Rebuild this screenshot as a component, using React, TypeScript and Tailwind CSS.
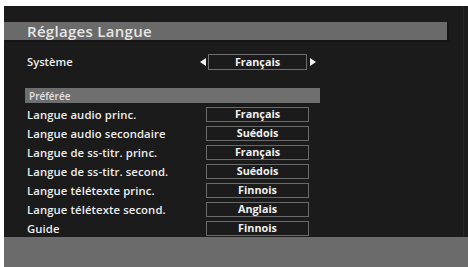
import React from "react";

const rows: [string, string][] = [
  ["Langue audio princ.", "Français"],
  ["Langue audio secondaire", "Suédois"],
  ["Langue de ss-titr. princ.", "Français"],
  ["Langue de ss-titr. second.", "Suédois"],
  ["Langue télétexte princ.", "Finnois"],
  ["Langue télétexte second.", "Anglais"],
  ["Guide", "Finnois"],
];

const font = { fontFamily: '"Open Sans", "DejaVu Sans", sans-serif' };

export default function App() {
  return (
    <div className="w-[468px] h-[267px] bg-white pt-[6px] pl-[4px] overflow-hidden" style={font}>
      <div className="w-[464px] h-[261px] bg-[#1b1b1b] flex flex-col relative">
        <div className="absolute right-[4px] top-0 bottom-[30px] w-px bg-[#262626]" />
        <div className="mt-[16px] mr-[21px] h-[18px] bg-[#6a6a6a] flex items-center pl-[23px] shadow-[2px_2px_0_#141414]">
          <span className="text-[15px] font-semibold text-[#e6e6e6] leading-none tracking-[0.3px]">Réglages Langue</span>
        </div>
        <div className="mt-[14px] h-[16px] flex items-center">
          <span className="ml-[23px] w-[173px] text-[11.2px] font-semibold text-[#eeeeee] leading-none">Système</span>
          <svg width="6" height="8" viewBox="0 0 6 8" className="mr-[1px]">
            <polygon points="6,0 6,8 0,4" fill="#f2f2f2" />
          </svg>
          <div className="w-[99px] h-[16px] border border-[#6f6f6f] flex items-center justify-center ml-[1px]">
            <span className="text-[10.8px] font-bold text-[#f0f0f0] leading-none">Français</span>
          </div>
          <svg width="6" height="8" viewBox="0 0 6 8" className="ml-[3px]">
            <polygon points="0,0 0,8 6,4" fill="#f2f2f2" />
          </svg>
        </div>
        <div className="mt-[18px] ml-[21px] w-[295px] h-[15px] bg-[#6e6e6e] flex items-center pl-[4px]">
          <span className="text-[10px] font-semibold text-[#e0e0e0] leading-none">Préférée</span>
        </div>
        <div className="mt-[4px] flex flex-col gap-[4px]">
          {rows.map(([label, value], i) => (
            <div key={i} className="h-[15px] flex items-center">
              <span className="ml-[23px] w-[179px] text-[11.3px] font-semibold text-[#eeeeee] leading-none tracking-[0.1px]">{label}</span>
              <div className="w-[103px] h-[15px] border border-[#6a6a6a] flex items-center justify-center">
                <span className="text-[10.8px] font-bold text-[#f0f0f0] leading-none">{value}</span>
              </div>
            </div>
          ))}
        </div>
        <div className="mt-auto h-[30px] bg-[#6b6b6b]" />
      </div>
    </div>
  );
}
